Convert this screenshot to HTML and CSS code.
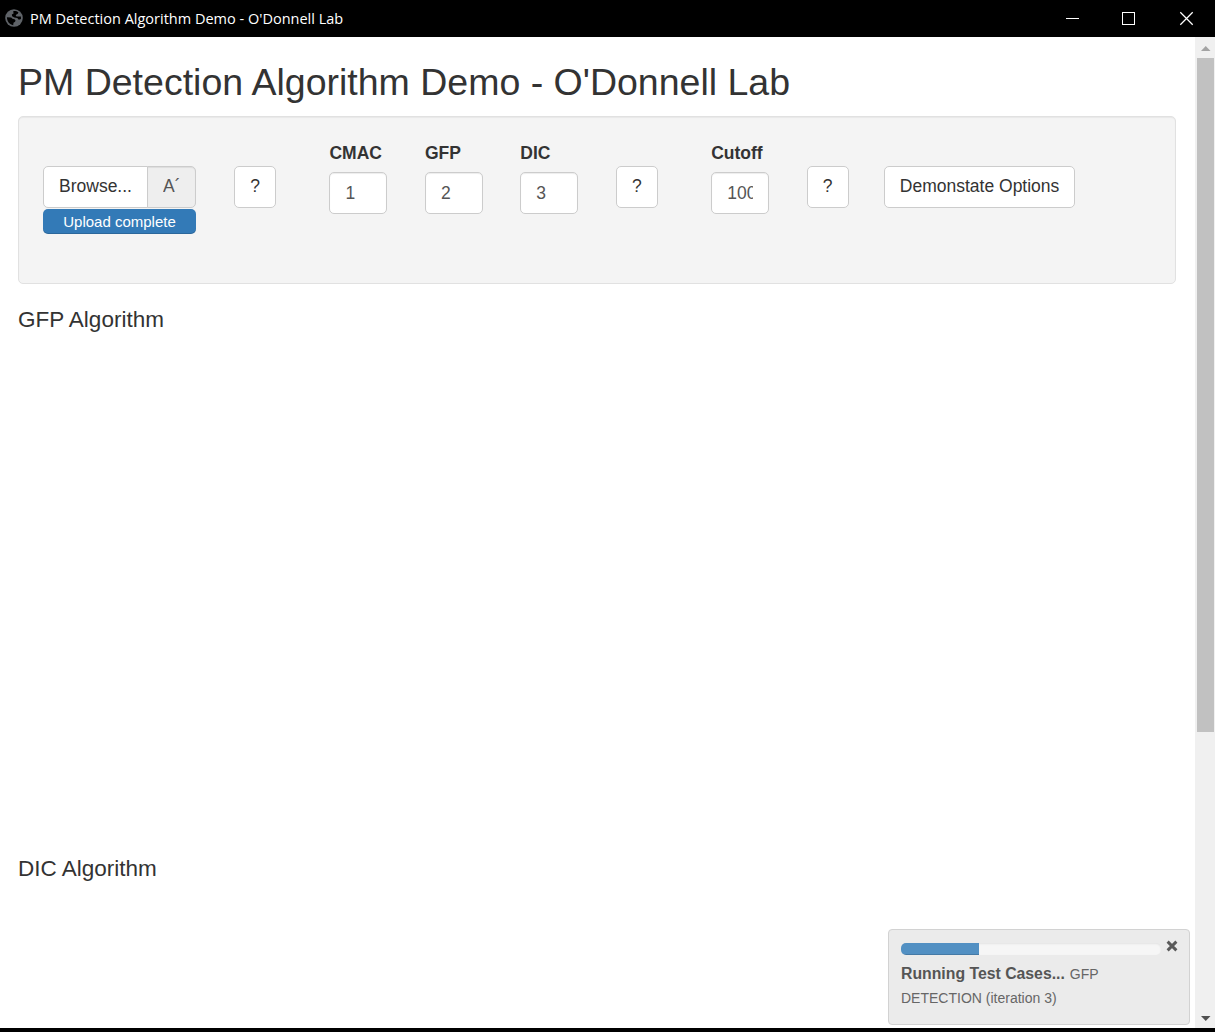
FILE: index.html
```html
<!DOCTYPE html>
<html lang="en">
<head>
<meta charset="utf-8">
<title>PM Detection Algorithm Demo - O'Donnell Lab</title>
<link rel="stylesheet" href="styles.css">
</head>
<body>
<div class="window">
  <header class="titlebar">
    <svg class="globe" viewBox="0 0 18 18" width="18" height="18">
      <circle cx="9" cy="9" r="8.800" fill="#5f6368"/>
      <path d="M8.200 2.200C10 1.800 12 2.200 13.400 3.300l-.6 1.500-1.700.9-.4 1.300 1.300.4h3.900l.1 2.600-2.200.8-1.500-1.800-3-.4-2.200-1.400-.3-1.700 1.800-.9zM1.900 8.300l4.300.1 1.300 1.300 2 .5 1 1.100-.4 1.500-1.600.9-.3 2.500C4.700 15.700 2 12.800 1.900 8.300z" fill="#000"/>
    </svg>
    <span class="caption">PM Detection Algorithm Demo - O'Donnell Lab</span>
    <svg class="controls" viewBox="0 0 143 37" width="143" height="37" fill="none" stroke="#fff">
      <path d="M0 18.500h13M56.500 12.500h12v12h-12z" shape-rendering="crispEdges"/>
      <path d="M114.300 12.300l12.400 12.400M126.700 12.300l-12.400 12.400" stroke-width="1.250"/>
    </svg>
  </header>
  <div class="viewport">
    <main class="page">
      <h2 class="page-title">PM Detection Algorithm Demo - O'Donnell Lab</h2>
      <section class="well">
        <div class="col col-wide">
          <div class="file-group">
            <button class="btn btn-browse">Browse...</button>
            <div class="file-name"><span class="clip">A´</span></div>
          </div>
          <div class="upload">Upload complete</div>
        </div>
        <div class="col"><button class="btn btn-help">?</button></div>
        <div class="col field"><label class="label">CMAC</label><div class="input"><span class="clip">1</span></div></div>
        <div class="col field"><label class="label">GFP</label><div class="input"><span class="clip">2</span></div></div>
        <div class="col field"><label class="label">DIC</label><div class="input"><span class="clip">3</span></div></div>
        <div class="col"><button class="btn btn-help">?</button></div>
        <div class="col field"><label class="label">Cutoff</label><div class="input"><span class="clip">100</span></div></div>
        <div class="col col-last"><button class="btn btn-help">?</button></div>
        <button class="btn">Demonstate Options</button>
      </section>
      <section class="plot"><h4 class="heading">GFP Algorithm</h4></section>
      <section class="plot"><h4 class="heading">DIC Algorithm</h4></section>
    </main>
    <div class="scrollbar">
      <svg class="arrow" viewBox="0 0 20 21" width="20" height="21"><path d="M6 14h9.500l-4.750-5z" fill="#a3a3a3"/></svg>
      <div class="thumb"></div>
      <svg class="arrow arrow-down" viewBox="0 0 20 21" width="20" height="21"><path d="M6 9h9.500l-4.750 5z" fill="#505050"/></svg>
    </div>
  </div>
  <aside class="notice">
    <div class="notice-top">
      <div class="progress"><div class="bar" style="width:30%"></div></div>
      <svg class="close" viewBox="0 0 12 12" width="12" height="12"><path d="M1.600 1.600l8.800 8.800M10.400 1.600l-8.800 8.800" stroke="#5a5a5a" stroke-width="2.900"/></svg>
    </div>
    <div class="notice-text">
      <div class="line"><strong class="message">Running Test Cases...</strong><span class="detail">GFP</span></div>
      <div class="line"><span class="detail">DETECTION (iteration 3)</span></div>
    </div>
  </aside>
</div>
</body>
</html>
```
FILE: styles.css
```css
* { box-sizing: border-box; }
body {
  margin: 0;
  background: #fff;
  color: #333;
  font: 17.5px/25px "Liberation Sans", Arial, sans-serif;
}
.window {
  position: relative;
  display: flex;
  flex-direction: column;
  height: 1032px;
  overflow: hidden;
  border-bottom: 4px solid #000;
}
.titlebar {
  display: flex;
  flex: none;
  align-items: center;
  height: 37px;
  padding-left: 5px;
  background: #000;
  color: #fff;
}
.globe { margin: -2px 7px 0 0; }
.caption {
  font: 14.5px/20px "Open Sans", "Noto Sans", sans-serif;
  white-space: nowrap;
}
.controls { margin-left: auto; margin-right: 6px; }
.viewport { display: flex; flex: 1; min-height: 0; }
.page { flex: 1; padding: 24px 19px 0 18px; overflow: hidden; }
.page-title {
  margin: 0 0 13px;
  font-size: 37.5px;
  font-weight: 400;
  line-height: 42px;
  white-space: nowrap;
}
.well {
  display: flex;
  align-items: flex-start;
  height: 168px;
  padding: 49px 24px 0;
  background: #f4f4f4;
  border: 1px solid #e1e1e1;
  border-radius: 5px;
  box-shadow: inset 0 1px 1px rgba(0, 0, 0, .05);
}
.col { flex: none; width: 95.45px; }
.col-wide { width: 191px; }
.col-last { width: 77.2px; }
.field { margin-top: -25px; }
.btn {
  height: 42px;
  padding: 0 15px 2px;
  background: #fff;
  border: 1px solid #ccc;
  border-radius: 5px;
  color: #333;
  font: inherit;
  white-space: nowrap;
}
.btn-help { width: 42px; }
.file-group { display: flex; width: 153px; }
.btn-browse { width: 105px; border-radius: 5px 0 0 5px; }
.file-name, .input {
  height: 42px;
  padding: 7px 15px;
  border: 1px solid #ccc;
  box-shadow: inset 0 1px 1px rgba(0, 0, 0, .075);
  color: #555;
}
.file-name {
  width: 49px;
  margin-left: -1px;
  background: #eee;
  border-radius: 0 5px 5px 0;
}
.input { width: 58px; padding-top: 8px; background: #fff; border-radius: 5px; }
.clip { display: block; overflow: hidden; white-space: nowrap; }
.label { display: block; margin-bottom: 6px; font-weight: 700; }
.upload {
  width: 153px;
  height: 25px;
  margin-top: 1px;
  background: #337ab7;
  border-radius: 5px;
  box-shadow: inset 0 -1px 0 rgba(0, 0, 0, .15);
  color: #fff;
  font-size: 15px;
  line-height: 25px;
  text-align: center;
}
.plot { height: 549px; padding-top: 22px; }
.heading { margin: 0; font-size: 22.5px; font-weight: 400; line-height: 27px; }
.scrollbar {
  display: flex;
  flex: none;
  flex-direction: column;
  width: 20px;
  background: #f0f0f0;
}
.arrow { flex: none; }
.arrow-down { margin-top: auto; }
.thumb { width: 17px; height: 674px; margin-left: 2px; background: #c1c1c1; }
.notice {
  position: absolute;
  top: 929px;
  left: 888px;
  width: 302px;
  height: 96px;
  padding: 11px 12px;
  background: #ebebeb;
  border: 1px solid #d2d2d2;
  border-radius: 4px;
}
.notice-top { display: flex; align-items: flex-start; }
.progress {
  flex: none;
  width: 260px;
  height: 12px;
  margin-top: 2px;
  overflow: hidden;
  background: #f6f6f6;
  border-radius: 5px;
  box-shadow: inset 0 1px 2px rgba(0, 0, 0, .08);
}
.bar { height: 12px; background: #5290c3; box-shadow: inset 0 -1px 0 rgba(0, 0, 0, .15); }
.close { flex: none; margin: -1px 0 0 5px; }
.notice-text { margin-top: 6px; color: #555; }
.line { display: flex; align-items: baseline; gap: 5px; height: 25px; line-height: 25px; white-space: nowrap; }
.message { font-size: 15.8px; }
.detail { font-size: 14px; color: #666; }
```
